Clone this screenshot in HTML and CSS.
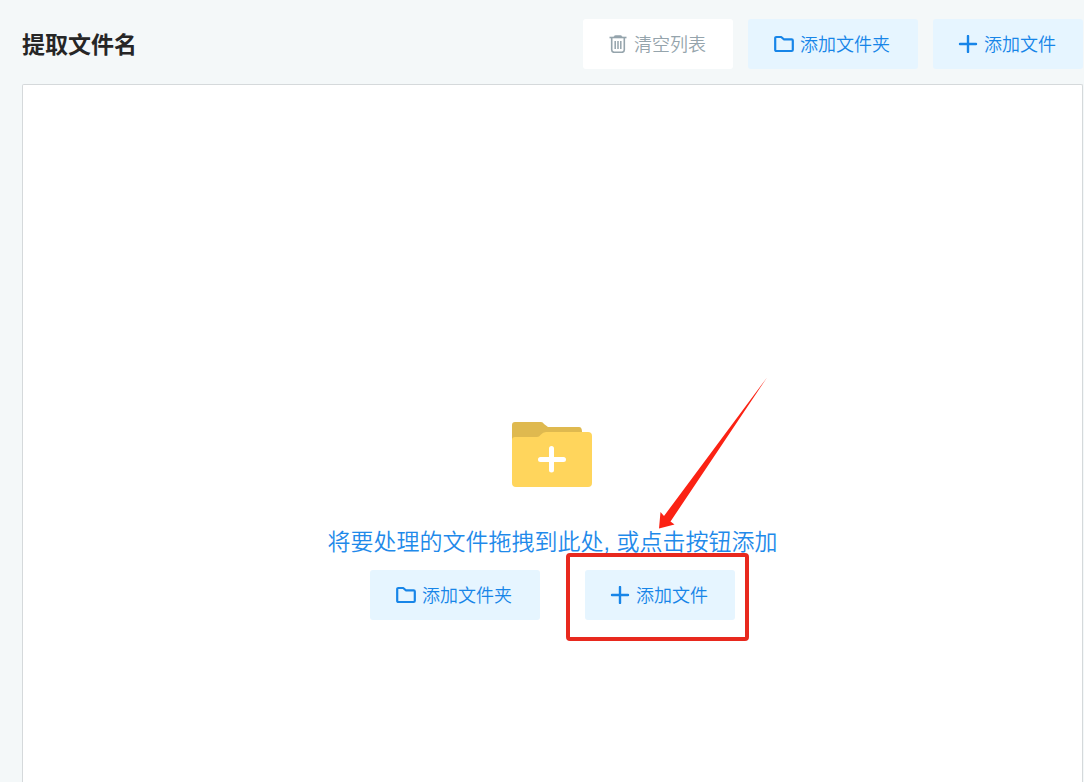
FILE: index.html
```html
<!DOCTYPE html>
<html lang="zh-CN">
<head>
<meta charset="utf-8">
<meta name="viewport" content="width=device-width, initial-scale=1">
<title>提取文件名</title>
<link rel="stylesheet" href="styles.css">
</head>
<body>
<svg class="sprite" aria-hidden="true">
  <symbol id="icon-folder" viewBox="0 0 20 18">
    <path d="M1.2 3.2Q1.2 2 2.4 2H7.2L9.8 4.3H17.6Q18.8 4.3 18.8 5.5V14.8Q18.8 16 17.6 16H2.4Q1.2 16 1.2 14.8Z" fill="none" stroke="currentColor" stroke-width="2.2" stroke-linejoin="round"/>
  </symbol>
  <symbol id="icon-plus" viewBox="0 0 20 18">
    <path d="M10 1V17M2 9H18" fill="none" stroke="currentColor" stroke-width="2.4" stroke-linecap="round"/>
  </symbol>
  <symbol id="icon-trash" viewBox="0 0 20 18">
    <path d="M1.500 2.500H18.500" stroke="currentColor" stroke-width="1.6"/>
    <path d="M6 2.200Q6.200 .4 7.500 .4H12.500Q13.800 .4 14 2.200Z" fill="currentColor" stroke="currentColor" stroke-width=".6"/>
    <path d="M3.700 3V14.800Q3.700 17.300 6.200 17.300H13.800Q16.300 17.300 16.300 14.800V3" fill="none" stroke="currentColor" stroke-width="1.6"/>
    <path d="M7.200 6V14M10 6V14M12.800 6V14" stroke="currentColor" stroke-width="1.5"/>
  </symbol>
</svg>

<header class="toolbar">
  <h1 class="title">提取文件名</h1>
  <div class="actions">
    <button class="btn btn-clear" type="button"><svg class="icon" aria-hidden="true"><use href="#icon-trash"/></svg>清空列表</button>
    <button class="btn btn-folder" type="button"><svg class="icon" aria-hidden="true"><use href="#icon-folder"/></svg>添加文件夹</button>
    <button class="btn" type="button"><svg class="icon" aria-hidden="true"><use href="#icon-plus"/></svg>添加文件</button>
  </div>
</header>

<main class="dropzone">
  <svg class="folder-art" viewBox="0 0 80 66" aria-hidden="true">
    <path d="M0 3Q0 0 3 0H29Q31 0 32 2L36 5H67Q70 5 70 10V30H0Z" fill="#dfb94f"/>
    <path d="M0 18Q0 15 3 15H25Q27 15 29 12.500Q31 10 34 10H76Q80 10 80 14V61Q80 65 76 65H4Q0 65 0 61Z" fill="#ffd55c"/>
    <path d="M39.500 26.500V48M28.500 37.500H51.500" stroke="#fff" stroke-width="5" stroke-linecap="round"/>
  </svg>
  <p class="hint">将要处理的文件拖拽到此处, 或点击按钮添加</p>
  <div class="choices">
    <button class="btn btn-folder" type="button"><svg class="icon" aria-hidden="true"><use href="#icon-folder"/></svg>添加文件夹</button>
    <div class="callout">
      <button class="btn" type="button"><svg class="icon" aria-hidden="true"><use href="#icon-plus"/></svg>添加文件</button>
      <svg class="arrow" viewBox="0 0 110 154" aria-hidden="true">
        <path d="M109 2.500L12.500 146.500L16.500 149.500L1 153.500L2.500 137L6 141Z" fill="#fb2214"/>
      </svg>
    </div>
  </div>
</main>
</body>
</html>
```
FILE: styles.css
```css
* {
  box-sizing: border-box;
}

body {
  display: flex;
  flex-direction: column;
  min-height: 100vh;
  margin: 0;
  padding: 0 1px 0 22px;
  overflow: hidden;
  background: #f4f8f9;
  font-family: "Liberation Sans", "Noto Sans CJK SC", sans-serif;
}

.sprite {
  position: absolute;
  width: 0;
  height: 0;
}

.toolbar {
  display: flex;
  align-items: center;
  justify-content: space-between;
  padding: 19px 0 15px;
}

.title {
  margin: 0;
  padding-top: 2px;
  color: #262626;
  font-size: 23px;
  font-weight: 700;
  line-height: 34px;
}

.actions {
  display: flex;
  gap: 15px;
}

.btn {
  display: flex;
  align-items: center;
  justify-content: center;
  gap: 6px;
  min-width: 150px;
  height: 50px;
  padding: 2px 26px 0 24px;
  border: 0;
  border-radius: 3px;
  background: #e6f5ff;
  color: #1785e8;
  font-family: inherit;
  font-size: 18px;
  font-weight: 350;
  line-height: 26px;
  white-space: nowrap;
  cursor: pointer;
}

.btn-folder {
  min-width: 170px;
}

.btn-clear {
  background: #fff;
  color: #95a4ac;
}

.icon {
  flex: none;
  width: 20px;
  height: 18px;
  margin-bottom: 2px;
}

.dropzone {
  display: flex;
  flex: 1;
  flex-direction: column;
  align-items: center;
  padding: 337px 0 24px;
  border: 1px solid #d5d9db;
  border-bottom: 0;
  border-radius: 2px 2px 0 0;
  background: #fff;
}

.folder-art {
  width: 80px;
  height: 66px;
  margin-right: 1px;
}

.hint {
  margin: 37px 0 11px;
  color: #1f8aea;
  font-size: 23px;
  font-weight: 350;
  line-height: 34px;
}

.choices {
  display: flex;
  gap: 45px;
}

.callout {
  position: relative;
}

.callout::after {
  content: "";
  position: absolute;
  inset: -17px -14px -21px -19px;
  border: 4px solid #e8291e;
  border-radius: 4px;
  pointer-events: none;
}

.arrow {
  position: absolute;
  bottom: 91px;
  left: 73px;
  width: 110px;
  height: 154px;
  pointer-events: none;
}
```
